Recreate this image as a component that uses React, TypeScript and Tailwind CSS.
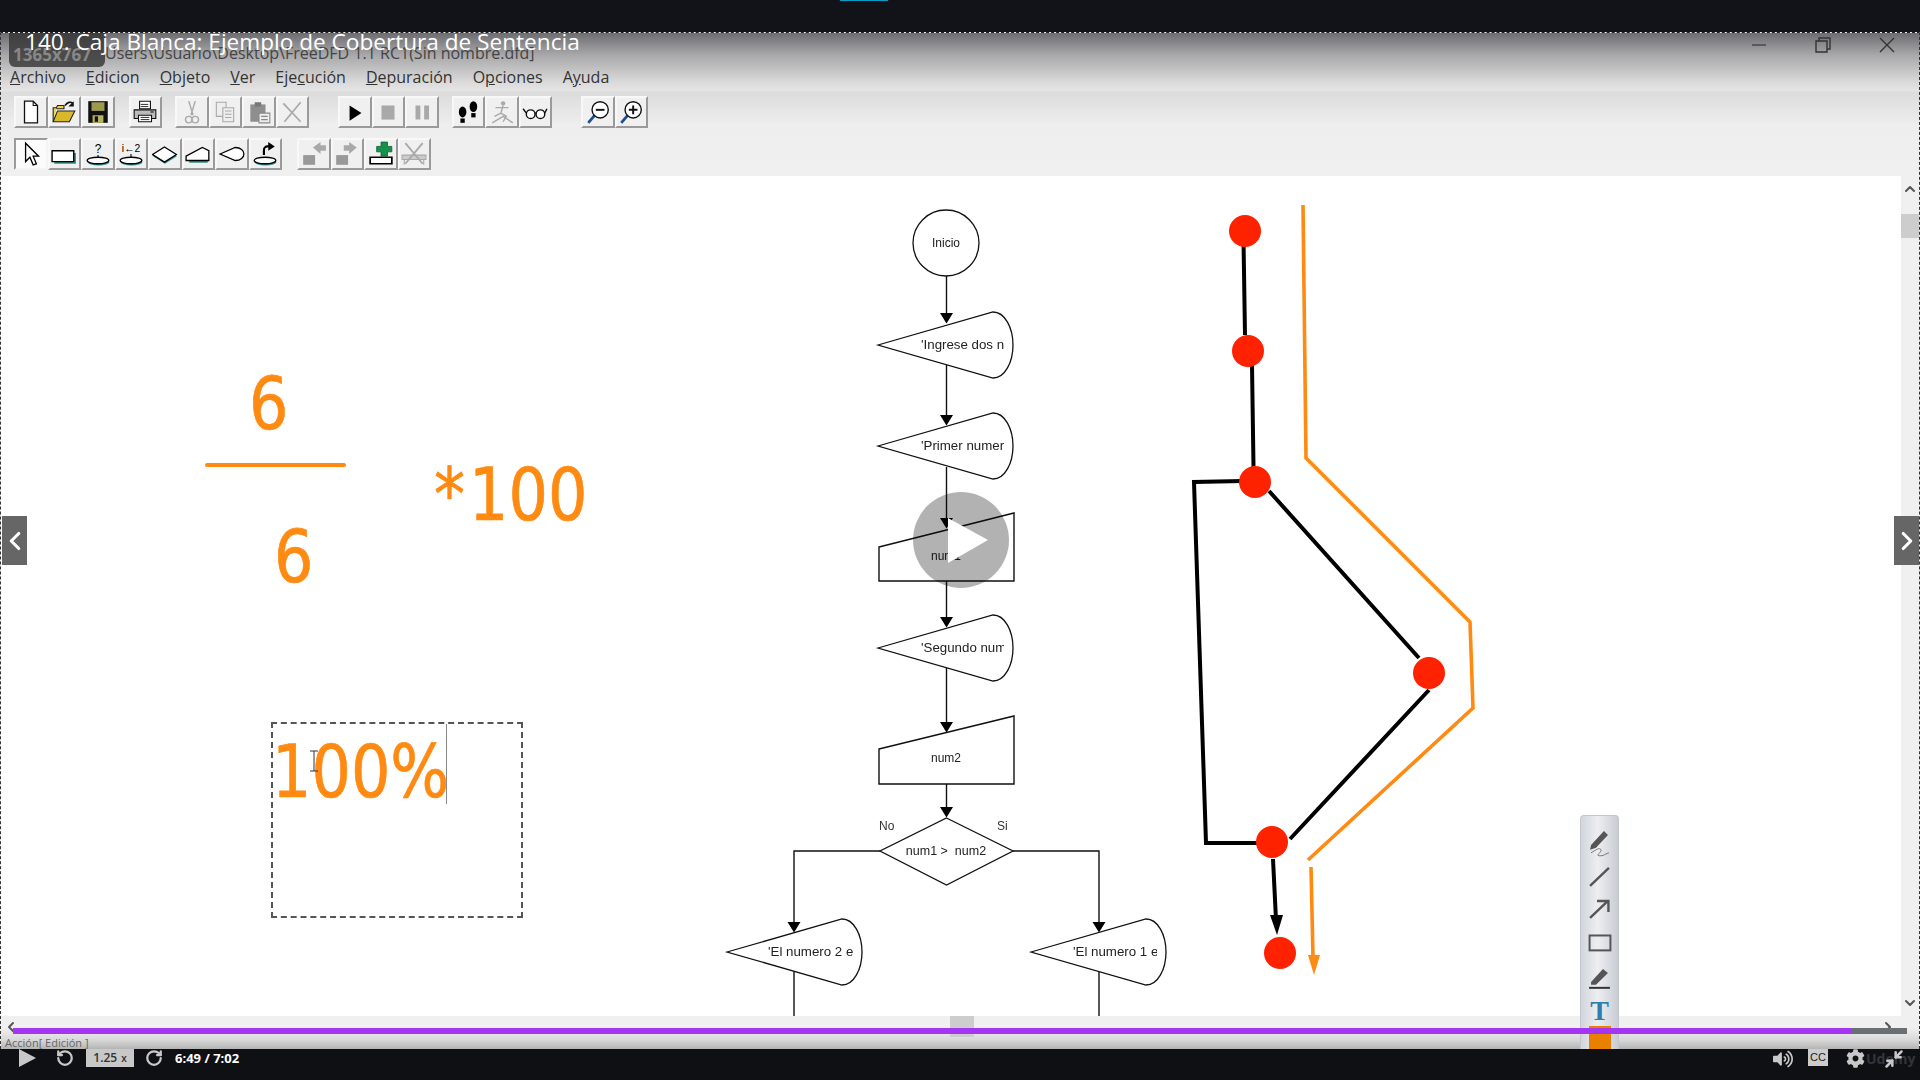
import React from 'react';
import { ChevronDown, ChevronLeft, ChevronRight, ChevronUp, Minimize2, RotateCcw, RotateCw } from 'lucide-react';
import { FaCog, FaVolumeUp } from 'react-icons/fa';

const MENU: [string, string, string][] = [
    ['', 'A', 'rchivo'],
    ['', 'E', 'dicion'],
    ['', 'O', 'bjeto'],
    ['', 'V', 'er'],
    ['Eje', 'c', 'ución'],
    ['', 'D', 'epuración'],
    ['O', 'p', 'ciones'],
    ['A', 'y', 'uda'],
];

const GRAY = '#a9a9a9';

function ToolButton({ children, pressed }: { children: React.ReactNode; pressed?: boolean }) {
    return (
        <div
            className={`flex h-full w-[33.5px] shrink-0 items-center justify-center border-2 ${pressed
                    ? 'border-t-[#9a9a9a] border-l-[#9a9a9a] border-r-[#f4f4f4] border-b-[#f4f4f4] bg-[#fbfbfb]'
                    : 'border-t-[#f8f8f8] border-l-[#f8f8f8] border-r-[#9a9a9a] border-b-[#9a9a9a] bg-[#f0f0f0]'
                }`}
        >
            <svg width="26" height="26" viewBox="0 0 24 24">
                {children}
            </svg>
        </div>
    );
}

function Ellipse({ y = 18, shadow = true }: { y?: number; shadow?: boolean }) {
    return (
        <>
            {shadow && <ellipse cx="12.5" cy={y + 1.5} rx="10" ry="3" fill="#2f8f8f" />}
            <ellipse cx="12" cy={y} rx="10" ry="3" fill="#fff" stroke="#000" strokeWidth="1.2" />
        </>
    );
}

function ToolbarTop() {
    return (
        <div className="mt-[6px] flex h-8 pl-[13px]">
            <ToolButton>
                <path d="M6 2h8l4 4v16H6z" fill="#fff" stroke="#111" strokeWidth="1.2" />
                <path d="M14 2v4h4" fill="none" stroke="#111" />
            </ToolButton>
            <ToolButton>
                <path d="M2 21V8h3l1-2h6v3h-7" fill="#e8d24a" stroke="#222" />
                <path d="M2 21l4-10h16l-5 10z" fill="#d8b92c" stroke="#222" />
                <path d="M13 6c2-3 5-4 7-2" fill="none" stroke="#111" strokeWidth="1.5" />
                <path d="M21 2v5h-5z" fill="#111" />
            </ToolButton>
            <ToolButton>
                <path d="M3 2h18v20H3z" fill="#111" />
                <path d="M6 3h12v8H6z" fill="#9c9a4e" />
                <path d="M7 15h10v7H7z" fill="#b5b35e" />
                <path d="M9 16h3v5H9z" fill="#111" />
            </ToolButton>
            <div className="w-[14px] shrink-0" />
            <ToolButton>
                <path d="M7 2h10v7H7z" fill="#fff" stroke="#111" />
                <path d="M2 10h20v8H2z" fill="#bbb" stroke="#111" />
                <path d="M6 15h12v6H6z" fill="#fff" stroke="#111" />
                <path d="M8 5h7M8 7h7M8 17h8M8 19h8" stroke="#111" strokeWidth="0.8" />
                <path d="M17 12h3" stroke="#111" />
            </ToolButton>
            <div className="w-[13px] shrink-0" />
            <ToolButton>
                <path d="M9 2l4 13M15 2l-4 13" stroke={GRAY} strokeWidth="1.3" fill="none" />
                <circle cx="9" cy="19" r="3" fill="none" stroke={GRAY} strokeWidth="1.3" />
                <circle cx="15" cy="19" r="3" fill="none" stroke={GRAY} strokeWidth="1.3" />
            </ToolButton>
            <ToolButton>
                <path d="M4 3h9v13H4z" fill="#eee" stroke={GRAY} />
                <path d="M10 8h10v13H10z" fill="#eee" stroke={GRAY} />
                <path d="M12 11h6M12 14h6M12 17h6" stroke={GRAY} />
            </ToolButton>
            <ToolButton>
                <path d="M4 5h14v16H4z" fill="#8e8e8e" />
                <path d="M8 3h6v4H8z" fill="#777" />
                <path d="M12 13h10v9H12z" fill="#eee" stroke="#888" />
                <path d="M14 16h6M14 19h6" stroke="#888" />
            </ToolButton>
            <ToolButton>
                <path d="M4 4l16 17M20 3L5 21" stroke={GRAY} strokeWidth="1.6" />
            </ToolButton>
            <div className="w-[29px] shrink-0" />
            <ToolButton>
                <path d="M7 6l11 7-11 7z" fill="#000" />
            </ToolButton>
            <ToolButton>
                <path d="M6 6h12v13H6z" fill={GRAY} />
            </ToolButton>
            <ToolButton>
                <path d="M6 6h4.5v13H6zM14 6h4.5v13H14z" fill={GRAY} />
            </ToolButton>
            <div className="w-[13px] shrink-0" />
            <ToolButton>
                <ellipse cx="7" cy="12" rx="3.5" ry="5" />
                <path d="M5 18h4v4H5z" />
                <ellipse cx="17" cy="7" rx="3.5" ry="5" />
                <path d="M15 13h4v4h-4z" />
            </ToolButton>
            <ToolButton>
                <circle cx="13" cy="4" r="2" fill={GRAY} />
                <path d="M13 6l-2 7 5 3-3 5M11 13l-6 3M6 8h12M3 22l10-6 9 6" stroke={GRAY} strokeWidth="1.3" fill="none" />
            </ToolButton>
            <ToolButton>
                <circle cx="8" cy="14" r="4" fill="#fff" stroke="#111" strokeWidth="1.3" />
                <circle cx="17" cy="14" r="4" fill="#fff" stroke="#111" strokeWidth="1.3" />
                <path d="M12 13h1M4 13L1 9M21 13l2-4" stroke="#111" strokeWidth="1.3" />
            </ToolButton>
            <div className="w-[29px] shrink-0" />
            <ToolButton>
                <path d="M9 15l-6 7" stroke="#1f4f8f" strokeWidth="2.5" />
                <circle cx="14" cy="10" r="7.5" fill="#fff" stroke="#111" strokeWidth="1.3" />
                <path d="M10 10h8" stroke="#111" strokeWidth="1.8" />
            </ToolButton>
            <ToolButton>
                <path d="M9 15l-6 7" stroke="#1f4f8f" strokeWidth="2.5" />
                <circle cx="14" cy="10" r="7.5" fill="#fff" stroke="#111" strokeWidth="1.3" />
                <path d="M10 10h8M14 6v8" stroke="#111" strokeWidth="1.8" />
            </ToolButton>
        </div>
    );
}

function ToolbarBottom() {
    return (
        <div className="mt-[10px] flex h-[33px] pl-[13px]">
            <ToolButton pressed>
                <path d="M7 2v17l4-4 3 7 3-1-3-7h5z" fill="#fff" stroke="#000" strokeWidth="1.2" />
            </ToolButton>
            <ToolButton>
                <path d="M3 11h20v10H3z" fill="#2f8f8f" />
                <path d="M1 9h20v10H1z" fill="#fff" stroke="#000" strokeWidth="1.3" />
            </ToolButton>
            <ToolButton>
                <text x="12" y="11" textAnchor="middle" fontSize="11" fontFamily="Liberation Sans, sans-serif">?</text>
                <path d="M12 13v3" stroke="#000" />
                <Ellipse />
            </ToolButton>
            <ToolButton>
                <text x="12" y="10" textAnchor="middle" fontSize="9.5" fontFamily="Liberation Sans, sans-serif">i←2</text>
                <path d="M12 12v3" stroke="#000" />
                <Ellipse />
            </ToolButton>
            <ToolButton>
                <path d="M1 14l11-7 11 7-11 7z" fill="#2f8f8f" />
                <path d="M0.5 12.5l11-7 11 7-11 7z" fill="#fff" stroke="#000" strokeWidth="1.2" />
            </ToolButton>
            <ToolButton>
                <path d="M2 13l18-6v11H3z" fill="#2f8f8f" transform="translate(1 2)" />
                <path d="M1 14L16 6l6 3v9H1z" fill="#fff" stroke="#000" strokeWidth="1.2" />
            </ToolButton>
            <ToolButton>
                <path d="M1 12l14-6c5 0 8 3 8 6s-3 6-8 6z" fill="#fff" stroke="#000" strokeWidth="1.2" />
            </ToolButton>
            <ToolButton>
                <path d="M11 13V8c0-2 2-3 3-3h2" stroke="#000" strokeWidth="2" fill="none" />
                <path d="M15 1l6 4-6 4z" fill="#000" />
                <Ellipse />
            </ToolButton>
            <div className="w-[15px] shrink-0" />
            <ToolButton>
                <path d="M2 13h11v9H2z" fill="#999" />
                <path d="M11 6l7-5v3h5v5h-5v3z" fill={GRAY} />
            </ToolButton>
            <ToolButton>
                <path d="M2 13h11v9H2z" fill="#999" />
                <path d="M21 6l-7-5v3H9v5h5v3z" fill={GRAY} />
            </ToolButton>
            <ToolButton>
                <path d="M2 15h20v6H2z" fill="#fff" stroke="#000" strokeWidth="1.6" />
                <path d="M12 1h6v4h4v5h-4v4h-6v-4H8V5h4z" fill="#14924a" stroke="#0b5a2d" strokeWidth="0.7" />
            </ToolButton>
            <ToolButton>
                <path d="M1 13h22v4H1zM3 17v5M21 17v5" fill="#ccc" stroke={GRAY} />
                <path d="M4 2l16 19M20 2L4 21" stroke={GRAY} strokeWidth="1.7" />
            </ToolButton>
        </div>
    );
}

function Arrow({ x, y }: { x: number; y: number }) {
    return <path d={`M${x - 6.5} ${y}h13l-6.5 10.5z`} fill="#000" />;
}

function OutputShape({ x, y, label, textX, clipId }: { x: number; y: number; label: string; textX: number; clipId: string }) {
    const path = `M${x} ${y}L${x + 115} ${y - 33}C${x + 127} ${y - 33} ${x + 135} ${y - 17} ${x + 135} ${y}C${x + 135} ${y + 17} ${x + 127} ${y + 33} ${x + 115} ${y + 33}Z`;
    return (
        <g>
            <path d={path} fill="#fff" stroke="#111" strokeWidth="1.3" />
            <clipPath id={clipId}>
                <rect x={textX - 2} y={y - 12} width={x + 128 - textX} height="24" />
            </clipPath>
            <text x={textX} y={y + 4} fontSize="13.3" fill="#222" clipPath={`url(#${clipId})`}>
                {label}
            </text>
        </g>
    );
}

function Flowchart() {
    const cx = 946.5;
    return (
        <svg
            className="absolute inset-0 blur-[0.3px]"
            width="1900"
            height="840"
            viewBox="1 176 1900 840"
            fontFamily="'Liberation Sans', Arial, sans-serif"
        >
            <g stroke="#111" strokeWidth="1.4" fill="none">
                <path d={`M${cx} 276V315M${cx} 364V417M${cx} 467V520M${cx} 581V619M${cx} 668V724M${cx} 784V809`} />
                <path d="M880 851H794V924M1013 851H1099V924M794 971V1016M1099 971V1016" />
            </g>
            <circle cx="946" cy="243" r="33" fill="#fff" stroke="#111" strokeWidth="1.3" />
            <text x="946" y="247" textAnchor="middle" fontSize="12" fill="#222">Inicio</text>

            <OutputShape x={878} y={345} label="'Ingrese dos numeros'" textX={921} clipId="c1" />
            <OutputShape x={878} y={446} label="'Primer numero'" textX={921} clipId="c2" />
            <OutputShape x={878} y={648} label="'Segundo numero'" textX={921} clipId="c3" />
            <OutputShape x={727} y={952} label="'El numero 2 es mayor'" textX={768} clipId="c4" />
            <OutputShape x={1031} y={952} label="'El numero 1 es mayor'" textX={1073} clipId="c5" />

            <path d="M879 547L1014 513V581H879Z" fill="#fff" stroke="#111" strokeWidth="1.4" />
            <text x="946" y="560" textAnchor="middle" fontSize="12" fill="#222">num1</text>
            <path d="M879 749L1014 716V784H879Z" fill="#fff" stroke="#111" strokeWidth="1.4" />
            <text x="946" y="762" textAnchor="middle" fontSize="12" fill="#222">num2</text>

            <path d="M946.5 818L1013 851L946.5 885L880 851Z" fill="#fff" stroke="#111" strokeWidth="1.3" />
            <text x="946" y="855" textAnchor="middle" fontSize="12.5" fill="#222">num1 &gt;{'\u00a0\u00a0'}num2</text>
            <text x="879" y="830" fontSize="12" fill="#333">No</text>
            <text x="997" y="830" fontSize="12" fill="#333">Si</text>

            {[313, 415, 518, 617, 722, 807].map((y) => (
                <Arrow key={y} x={cx} y={y} />
            ))}
            <Arrow x={794} y={922} />
            <Arrow x={1099} y={922} />
        </svg>
    );
}

function PathDiagram() {
    const dots = [
        [1245, 231],
        [1248, 351],
        [1255, 482],
        [1429, 673],
        [1272, 842],
        [1280, 953],
    ];
    return (
        <svg className="absolute inset-0" width="1900" height="840" viewBox="1 176 1900 840">
            <g stroke="#000" strokeWidth="4" fill="none" strokeLinejoin="miter">
                <path d="M1243.5 240L1245 335M1252 365L1253.5 467" />
                <path d="M1243 481L1194 482L1206 843H1258" />
                <path d="M1269 491L1419 658M1429 690L1290 839M1273 859L1276 920" />
            </g>
            <path d="M1270 915h13l-6 20z" fill="#000" />
            <g stroke="#ff8a12" strokeWidth="3.6" fill="none" strokeLinejoin="miter">
                <path d="M1303 205L1306 458L1470 622L1473 708L1308 860" />
                <path d="M1311 867L1313 957" />
            </g>
            <path d="M1308 955h12l-6 20z" fill="#ff8a12" />
            {dots.map(([x, y]) => (
                <circle key={x} cx={x} cy={y} r="16" fill="#ff2200" />
            ))}
        </svg>
    );
}

function Canvas() {
    return (
        <div className="relative w-[1900px] shrink-0 overflow-hidden bg-white">
            <Flowchart />
            <PathDiagram />

            {/* handwritten notes */}
            <div className="absolute left-[248px] top-[201px] origin-[0_52px] scale-y-[1.17] font-['DejaVu_Sans',sans-serif] text-[62px] leading-none text-[#ff8a12] [-webkit-text-stroke:0.6px_#ff8a12]">6</div>
            <div className="absolute left-[204px] top-[287px] h-[4px] w-[141px] rounded-full bg-[#ff8a12]" />
            <div className="absolute left-[273px] top-[354px] origin-[0_52px] scale-y-[1.17] font-['DejaVu_Sans',sans-serif] text-[62px] leading-none text-[#ff8a12] [-webkit-text-stroke:0.6px_#ff8a12]">6</div>
            <div className="absolute left-[433px] top-[292px] origin-[0_52px] scale-y-[1.17] whitespace-pre font-['DejaVu_Sans',sans-serif] text-[62px] leading-none text-[#ff8a12] [-webkit-text-stroke:0.6px_#ff8a12]">
                *<span className="ml-1">100</span>
            </div>
            <div className="absolute left-[270px] top-[546px] h-[196px] w-[252px] border-2 border-dashed border-[#555]">
                <div className="-ml-[1px] mt-[21px] origin-[0_52px] scale-y-[1.17] font-['DejaVu_Sans',sans-serif] text-[62px] leading-none text-[#ff8a12] [-webkit-text-stroke:0.6px_#ff8a12]">100%</div>
                <div className="absolute left-[173px] top-0 h-[80px] w-px bg-[#888]" />
                <svg className="absolute left-[35px] top-[26px]" width="12" height="22" viewBox="0 0 12 22">
                    <path d="M2 1h8M6 1v20M2 21h8" stroke="#333" strokeWidth="1" fill="none" />
                </svg>
            </div>

            {/* video play button */}
            <div className="absolute left-[912px] top-[316px] flex h-24 w-24 items-center justify-center rounded-full bg-black/30">
                <svg width="96" height="96" viewBox="0 0 96 96">
                    <path d="M35 26L75 48L35 71Z" fill="#fff" />
                </svg>
            </div>
        </div>
    );
}

function PenToolbar() {
    return (
        <div className="absolute left-[1580px] top-[815px] flex h-[234px] w-[39px] flex-col items-center rounded-t-[4px] border-x border-t border-[#c4c6cc] bg-[linear-gradient(to_right,#d2d5db,#eceef2_45%,#c9ccd3)]">
            <svg className="mt-[12px]" width="24" height="30" viewBox="0 0 24 30">
                <path d="M3 17L16 3l4 4L8 20l-6 2z" fill="#555" />
                <path d="M3 25c5-3 9-6 10-3s-6 5-2 6 8-3 10-3" stroke="#777" fill="none" />
            </svg>
            <svg className="mt-[8px]" width="24" height="22" viewBox="0 0 24 22">
                <path d="M2 20L21 2" stroke="#555" strokeWidth="2.4" />
            </svg>
            <svg className="mt-[10px]" width="24" height="22" viewBox="0 0 24 22">
                <path d="M2 20L20 3M9 3h11.5v11" stroke="#555" strokeWidth="2.4" fill="none" />
            </svg>
            <svg className="mt-[15px]" width="24" height="18" viewBox="0 0 24 18">
                <rect x="1.5" y="1.5" width="21" height="15" stroke="#555" strokeWidth="2" fill="none" />
            </svg>
            <svg className="mt-[14px]" width="24" height="24" viewBox="0 0 24 24">
                <path d="M3 16L15 3l5 4L8 19H3z" fill="#555" />
                <path d="M1 22h21" stroke="#333" strokeWidth="2" />
            </svg>
            <span className="mt-[6px] font-['Liberation_Serif',serif] text-[28px] font-bold leading-[30px] text-[#2f7fae]">T</span>
            <div className="h-[23px] w-[22px] bg-[#ea8000]" />
        </div>
    );
}

function BottomBar() {
    return (
        <div className="flex h-[31px] shrink-0 items-start bg-[#0f1014] pl-[19px] text-[#c8c8c8]">
            <svg width="17" height="18" viewBox="0 0 17 18">
                <path d="M0 0L17 9L0 18Z" fill="#c8c8c8" />
            </svg>
            <RotateCcw className="ml-[20px]" size={18} strokeWidth={3} />
            <div className="ml-[12px] flex h-[18px] w-12 items-center justify-center bg-[#c8c8c8] font-['Open_Sans',sans-serif] text-[12px] font-semibold text-[#333]">
                1.25<span className="ml-1 text-[10px]">x</span>
            </div>
            <RotateCw className="ml-[11px]" size={18} strokeWidth={3} />
            <span className="ml-[12px] font-['Open_Sans',sans-serif] text-[13px] font-bold leading-[18px] text-white">6:49 / 7:02</span>

            <FaVolumeUp className="ml-auto" size={20} />
            <div className="ml-[15px] flex h-[17px] w-5 items-center justify-center bg-[#cccccc] font-['Liberation_Sans',sans-serif] text-[11px] text-[#222]">CC</div>
            <div className="relative ml-[18px] flex w-[74px]">
                <span className="absolute left-[20px] top-[1px] font-['Open_Sans',sans-serif] text-[14px] font-bold leading-[18px] text-[#33353a]">Udemy</span>
                <FaCog className="relative" size={19} />
                <Minimize2 className="relative ml-[19px]" size={20} strokeWidth={3} />
            </div>
        </div>
    );
}

export default function App() {
    return (
        <div className="relative flex h-[1080px] w-[1920px] flex-col overflow-hidden bg-[#111318]">
            {/* player top strip */}
            <div className="h-8 shrink-0">
                <div className="ml-[840px] h-px w-12 bg-[#0b9ac4]" />
            </div>

            {/* recorded desktop window */}
            <div className="flex min-h-0 flex-1 flex-col border-x border-t border-dashed border-x-[#333] border-t-[#222] bg-[linear-gradient(to_bottom,#6d6d71_0,#a8a8aa_22px,#d8d8d8_48px,#e4e4e4_57px,#dcdcdc_60px,#eeeeee_92px,#f0f0f0_140px)]">
                <div className="relative flex h-[32px] shrink-0 items-center pr-[24px]">
                    <div className="absolute left-2 top-0 flex h-[34px] w-24 items-end rounded-b-md bg-[#333]/80 pb-[2px] pl-[4px] font-['Open_Sans',sans-serif] text-[17px] font-bold leading-5 text-[#888]">
                        1365x767
                    </div>
                    <span className="absolute left-[104px] top-[8px] whitespace-nowrap font-['Open_Sans',sans-serif] text-[16px] text-[#444]">
                        Users\Usuario\Desktop\FreeDFD 1.1 RC1(Sin nombre.dfd]
                    </span>
                    <span className="absolute left-[24px] top-[-7px] whitespace-nowrap font-['Open_Sans',sans-serif] text-[22.6px] leading-8 text-white">
                        140. Caja Blanca: Ejemplo de Cobertura de Sentencia
                    </span>
                    <div className="ml-auto flex items-center gap-12 pb-[8px]">
                        <svg width="16" height="16" viewBox="0 0 16 16">
                            <path d="M1 8h14" stroke="#444" strokeWidth="1.4" />
                        </svg>
                        <svg width="16" height="16" viewBox="0 0 16 16">
                            <path d="M4 4V1h11v11h-3M1 4h11v11H1z" stroke="#333" strokeWidth="1.4" fill="none" />
                        </svg>
                        <svg width="16" height="16" viewBox="0 0 16 16">
                            <path d="M1 1l14 14M15 1L1 15" stroke="#333" strokeWidth="1.4" />
                        </svg>
                    </div>
                </div>

                <div className="flex h-[25px] shrink-0 items-center gap-5 pb-[2px] pl-[9px] font-['Open_Sans',sans-serif] text-[16px] text-[#333]">
                    {MENU.map(([pre, key, post]) => (
                        <span key={pre + key + post}>
                            {pre}
                            <span className="underline">{key}</span>
                            {post}
                        </span>
                    ))}
                </div>

                <ToolbarTop />
                <ToolbarBottom />

                <div className="mt-[6px] flex h-[840px] shrink-0">
                    <Canvas />
                    <div className="flex flex-1 flex-col items-center pt-[5px] text-[#555]">
                        <ChevronUp size={16} strokeWidth={3} />
                        <div className="mt-[17px] h-6 w-full bg-[#cdcdcd]" />
                        <ChevronDown className="mt-auto mb-[5px]" size={16} strokeWidth={3} />
                    </div>
                </div>

                {/* horizontal scrollbar, progress and status line */}
                <div className="relative h-[33px] shrink-0 bg-[linear-gradient(to_bottom,#f0f0f0_0,#f0f0f0_12px,#d8d8d8_24px,#b4b4b4_33px)]">
                    <ChevronLeft className="absolute left-[2px] top-[3px] text-[#555]" size={16} strokeWidth={3} />
                    <ChevronRight className="absolute left-[1879px] top-[3px] text-[#555]" size={16} strokeWidth={3} />
                    <div className="absolute left-[949px] top-0 h-[21px] w-6 bg-[#cdcdcd]" />
                    <div className="absolute left-[12px] top-3 z-10 flex h-[6px] w-[1894px]">
                        <div className="w-[1839px] bg-[#a435f0]" />
                        <div className="flex-1 bg-[#6a6f73]" />
                    </div>
                    <span className="absolute left-[4px] top-[21px] font-['Open_Sans',sans-serif] text-[11px] leading-3 text-[#666]">
                        Acción[ Edición ]
                    </span>
                </div>
            </div>

            <BottomBar />
            <PenToolbar />

            {/* lecture navigation */}
            <div className="absolute left-[2px] top-[516px] flex h-[49px] w-[25px] items-center justify-center bg-[#666]">
                <ChevronLeft className="shrink-0 text-white" size={30} strokeWidth={2.5} />
            </div>
            <div className="absolute left-[1894px] top-[516px] flex h-[49px] w-[25px] items-center justify-center bg-[#666]">
                <ChevronRight className="shrink-0 text-white" size={30} strokeWidth={2.5} />
            </div>
        </div>
    );
}
